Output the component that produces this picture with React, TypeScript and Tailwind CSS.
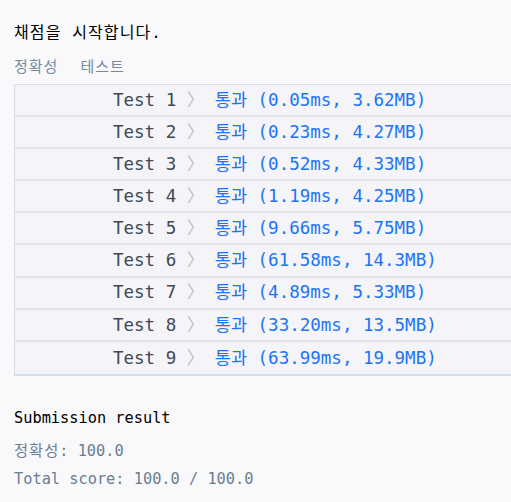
import React from 'react'

const mono = { fontFamily: '"DejaVu Sans Mono", "Noto Sans CJK KR", monospace' }

const results = [
  { n: 1, time: '0.05ms', mem: '3.62MB' },
  { n: 2, time: '0.23ms', mem: '4.27MB' },
  { n: 3, time: '0.52ms', mem: '4.33MB' },
  { n: 4, time: '1.19ms', mem: '4.25MB' },
  { n: 5, time: '9.66ms', mem: '5.75MB' },
  { n: 6, time: '61.58ms', mem: '14.3MB' },
  { n: 7, time: '4.89ms', mem: '5.33MB' },
  { n: 8, time: '33.20ms', mem: '13.5MB' },
  { n: 9, time: '63.99ms', mem: '19.9MB' },
]

export default function App() {
  return (
    <div className="min-h-screen bg-[#f9f9fc] pl-[14px] pt-[23px]" style={mono}>
      {/* 채점 헤더 */}
      <p className="text-[16px] leading-[20px] tracking-[1.1px] text-black">채점을 시작합니다.</p>
      <div className="mt-[14px] flex gap-[22px] text-[15px] leading-[20px] tracking-[1px] text-[#7589a0]">
        <span>정확성</span>
        <span>테스트</span>
      </div>

      {/* 테스트 결과 테이블 */}
      <div className="mt-[7px] border-t border-l border-b-2 border-[#d5dee8] bg-[#f4f4f9]">
        {results.map((r, i) => (
          <div
            key={r.n}
            className={`flex h-[32.1px] items-center whitespace-pre pl-[98px] text-[17.5px] ${
              i < results.length - 1 ? 'border-b-2 border-[#dde4ec]' : ''
            }`}
          >
            <span className="text-[#3f4854]">Test {r.n} </span>
            <span className="text-[#b9bfc6]">〉</span>
            <span className="text-[#1b74f5]">
              {' '}통과 ({r.time}, {r.mem})
            </span>
          </div>
        ))}
      </div>

      {/* 최종 결과 */}
      <div className="mt-[32px] text-[15.3px] leading-[20px]">
        <p className="text-black">Submission result</p>
        <p className="mt-[13px] text-[#6a7d92]">
          <span className="tracking-[1px]">정확성</span>: 100.0
        </p>
        <p className="mt-[8px] text-[#6a7d92]">Total score: 100.0 / 100.0</p>
      </div>
    </div>
  )
}
